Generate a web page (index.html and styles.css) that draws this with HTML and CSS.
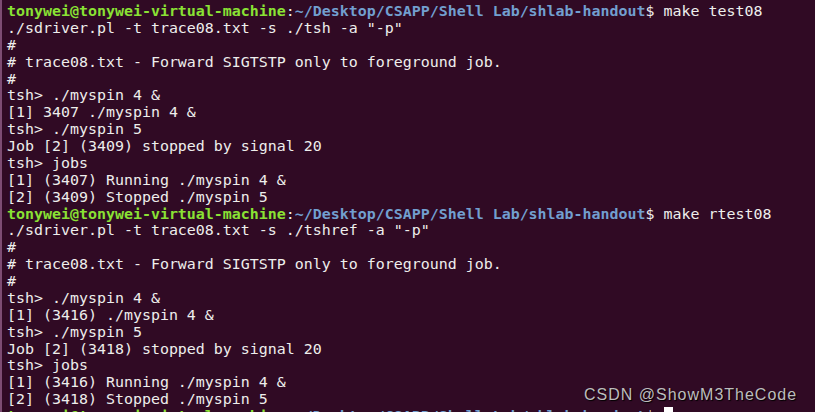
FILE: index.html
```html
<!DOCTYPE html>
<html>
<head>
<meta charset="utf-8">
<link rel="stylesheet" href="styles.css">
</head>
<body>
<div class="term">
<div class="edge"></div>
<pre class="out"><span class="u">tonywei@tonywei-virtual-machine</span>:<span class="p">~/Desktop/CSAPP/Shell Lab/shlab-handout</span>$ make test08
./sdriver.pl -t trace08.txt -s ./tsh -a "-p"
#
# trace08.txt - Forward SIGTSTP only to foreground job.
#
tsh&gt; ./myspin 4 &amp;
[1] 3407 ./myspin 4 &amp;
tsh&gt; ./myspin 5
Job [2] (3409) stopped by signal 20
tsh&gt; jobs
[1] (3407) Running ./myspin 4 &amp;
[2] (3409) Stopped ./myspin 5
<span class="u">tonywei@tonywei-virtual-machine</span>:<span class="p">~/Desktop/CSAPP/Shell Lab/shlab-handout</span>$ make rtest08
./sdriver.pl -t trace08.txt -s ./tshref -a "-p"
#
# trace08.txt - Forward SIGTSTP only to foreground job.
#
tsh&gt; ./myspin 4 &amp;
[1] (3416) ./myspin 4 &amp;
tsh&gt; ./myspin 5
Job [2] (3418) stopped by signal 20
tsh&gt; jobs
[1] (3416) Running ./myspin 4 &amp;
[2] (3418) Stopped ./myspin 5
<span class="u">tonywei@tonywei-virtual-machine</span>:<span class="p">~/Desktop/CSAPP/Shell Lab/shlab-handout</span>$ <span class="cursor"> </span></pre>
<div class="mark">CSDN @ShowM3TheCode</div>
</div>
</body>
</html>
```
FILE: styles.css
```css
html, body {
  margin: 0;
  padding: 0;
  background: #300a24;
  overflow: hidden;
}
.term {
  position: relative;
  width: 815px;
  height: 412px;
  display: flex;
  background: #300a24;
  overflow: hidden;
}
.edge {
  width: 2px;
  flex: none;
  background: #7d4c73;
}
.out {
  margin: 0;
  padding: 3px 0 0 5px;
  font-family: "DejaVu Sans Mono", monospace;
  font-size: 14.95px;
  line-height: 16.87px;
  color: #eeeeec;
  white-space: pre;
}
.u {
  color: #8ae234;
  font-weight: bold;
}
.p {
  color: #729fcf;
  font-weight: bold;
}
.cursor {
  background: #ffffff;
}
.mark {
  position: absolute;
  left: 584px;
  top: 386px;
  font-family: "Liberation Sans", Arial, sans-serif;
  font-size: 16px;
  letter-spacing: 1px;
  color: #bdbdbd;
  text-shadow: 1px 1px 1px #000000;
}
```
